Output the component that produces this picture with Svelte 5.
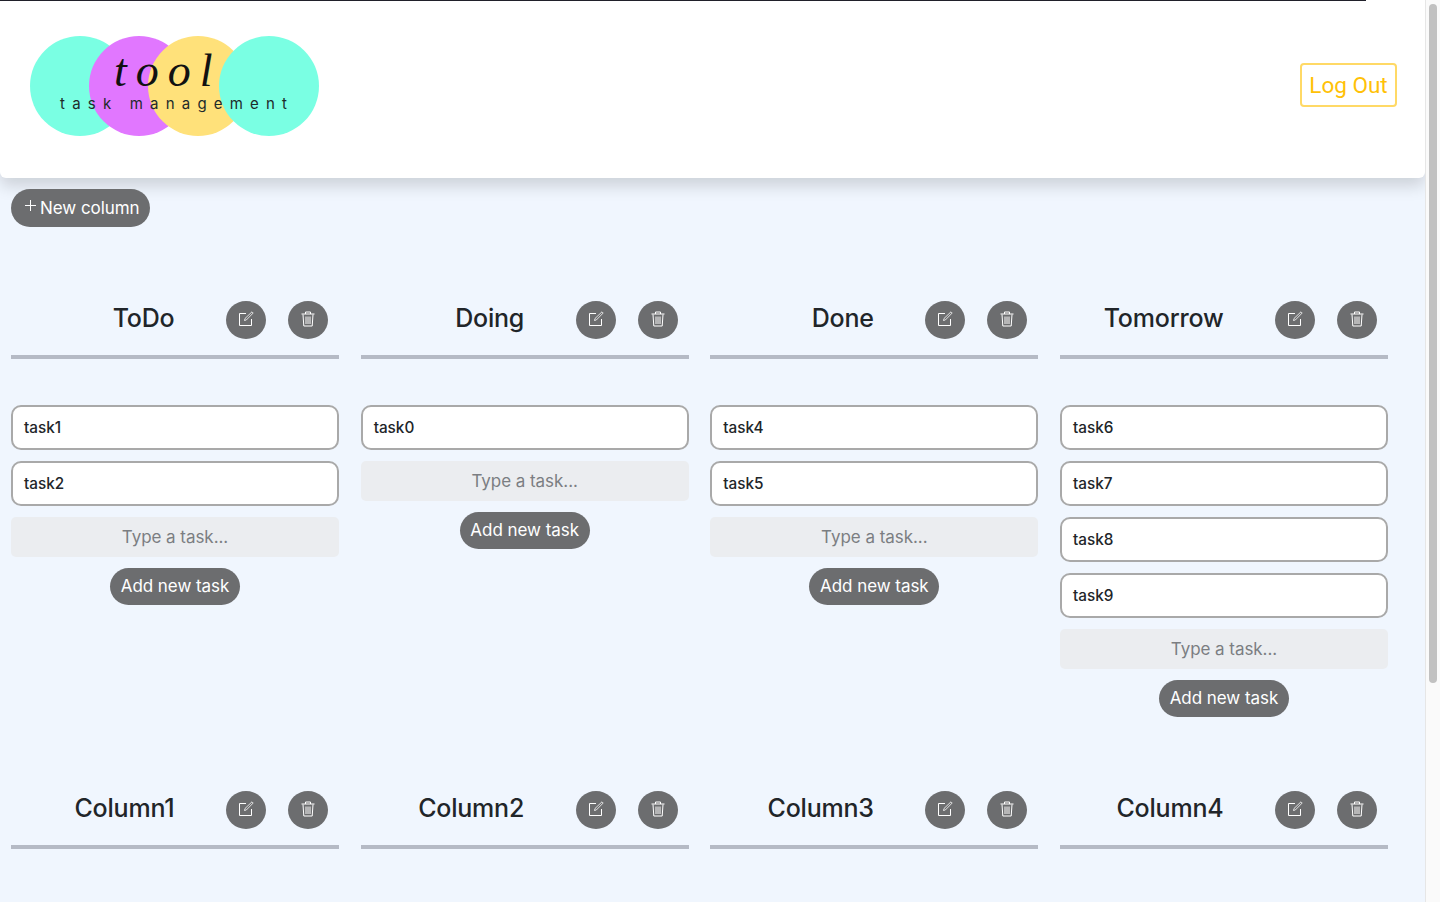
<script>
	const rows = [
		[
			{ title: 'ToDo', tasks: ['task1', 'task2'] },
			{ title: 'Doing', tasks: ['task0'] },
			{ title: 'Done', tasks: ['task4', 'task5'] },
			{ title: 'Tomorrow', tasks: ['task6', 'task7', 'task8', 'task9'] }
		],
		[
			{ title: 'Column1', tasks: [] },
			{ title: 'Column2', tasks: [] },
			{ title: 'Column3', tasks: [] },
			{ title: 'Column4', tasks: [] }
		]
	];
</script>

<div class="page">
	<div class="topline"></div>
	<header class="navbar">
		<div class="logo">
			<span class="circle c1"></span>
			<span class="circle c2"></span>
			<span class="circle c3"></span>
			<span class="circle c4"></span>
			<span class="tool">tool</span>
			<span class="sub">task management</span>
		</div>
		<button class="logout">Log Out</button>
	</header>

	<main class="board">
		<button class="pill new-col">
			<svg class="plus" width="11" height="11" viewBox="0 0 11 11" stroke="#fff" stroke-width="1">
				<path d="M5.5 0v11M0 5.5h11" />
			</svg>
			<span>New column</span>
		</button>

		{#each rows as row, r}
			<div class="row" class:last={r === rows.length - 1}>
				{#each row as col}
					<section class="column">
						<div class="col-head">
							<h2>{col.title}</h2>
							<button class="round" aria-label="Edit column">
								<svg width="16" height="16" viewBox="0 0 16 16" fill="none" stroke="#fff" stroke-width="1">
									<path d="M13.5 8v6.5h-12v-12H8" />
									<path d="M6.5 9.5l.5-2L14 .8l1.2 1.2L8.3 9z" stroke-width=".8" />
								</svg>
							</button>
							<button class="round" aria-label="Delete column">
								<svg width="16" height="16" viewBox="0 0 16 16" fill="none" stroke="#fff" stroke-width="1">
									<path d="M1.5 3h13M5.5 3V1h5v2" />
									<path d="M3 3.5l.8 11.5h8.4l.8-11.5" />
									<path d="M6 5.5v7.5M8 5.5v7.5M10 5.5v7.5" />
								</svg>
							</button>
						</div>
						<div class="rule"></div>
						{#if r === 0}
							<div class="tasks">
								{#each col.tasks as task}
									<div class="task">{task}</div>
								{/each}
								<input class="type-task" placeholder="Type a task..." />
								<button class="pill add">Add new task</button>
							</div>
						{/if}
					</section>
				{/each}
			</div>
		{/each}
	</main>

	<div class="scrollbar"><div class="thumb"></div></div>
</div>

<style>
	:global(html), :global(body) {
		margin: 0;
		height: 902px;
		overflow: hidden;
	}
	.page {
		height: 902px;
		width: 1440px;
		background: #f0f6fe;
		font-family: Inter, "Liberation Sans", sans-serif;
		color: #212529;
		position: relative;
		overflow: hidden;
	}
	.topline {
		position: absolute;
		left: 0;
		top: 0;
		width: 1366px;
		height: 1px;
		background: #20202a;
		z-index: 2;
	}
	.navbar {
		width: 1425px;
		height: 178px;
		box-sizing: border-box;
		background: #fff;
		border-radius: 0 0 6px 6px;
		box-shadow: 0 8px 16px rgba(0, 0, 0, 0.15);
		display: flex;
		align-items: center;
		justify-content: space-between;
		padding: 0 28px 0 30px;
		position: relative;
	}
	.logo {
		position: relative;
		width: 289px;
		height: 100px;
		margin-top: -6px;
	}
	.circle {
		position: absolute;
		top: 0;
		width: 100px;
		height: 100px;
		border-radius: 50%;
	}
	.c1 { left: 0; background: #7affe3; }
	.c2 { left: 59px; background: #e177ff; }
	.c3 { left: 118px; background: #ffe17a; }
	.c4 { left: 189px; background: #7affe3; }
	.tool {
		position: absolute;
		left: 84px;
		top: 5px;
		font-family: "Liberation Serif", serif;
		font-style: italic;
		font-size: 46px;
		line-height: 60px;
		letter-spacing: 9px;
		color: #111;
	}
	.sub {
		position: absolute;
		left: 30px;
		top: 58px;
		font-size: 15px;
		line-height: 20px;
		letter-spacing: 7.2px;
		white-space: nowrap;
		color: #1d2a2a;
	}
	.logout {
		width: 97px;
		height: 44px;
		margin-top: -8px;
		box-sizing: border-box;
		background: #fff;
		border: 2px solid #ffd966;
		border-radius: 4px;
		color: #ffc107;
		font-family: Roboto, sans-serif;
		font-size: 22.5px;
		padding: 0;
	}
	.board {
		padding: 11px 0 0 11px;
	}
	.pill {
		background: #6c6d6f;
		color: #fff;
		border: none;
		border-radius: 19px;
		font-family: inherit;
		font-size: 17px;
		height: 38px;
		padding: 0 0 1px;
		letter-spacing: -0.05px;
	}
	.new-col {
		width: 139px;
		display: flex;
		align-items: center;
		padding: 0 0 1px 14px;
		gap: 4px;
		position: relative;
		z-index: 1;
	}
	.plus {
		position: relative;
		top: -2px;
	}
	.row {
		display: grid;
		grid-template-columns: repeat(4, 328px);
		column-gap: 21.67px;
		padding-top: 73px;
		height: 417px;
	}
	.row.last {
		height: auto;
	}
	.col-head {
		display: flex;
		align-items: center;
		height: 40px;
	}
	h2 {
		width: 163.5px;
		flex: none;
		margin: 0 51.5px 0 0;
		text-align: right;
		font-size: 25px;
		font-weight: 500;
		line-height: 36px;
		position: relative;
		top: -2px;
		letter-spacing: -0.2px;
		white-space: nowrap;
	}
	.round {
		width: 40px;
		height: 38px;
		flex: none;
		border: none;
		border-radius: 50%;
		background: #6c6d6f;
		padding: 0 0 2px;
		display: flex;
		align-items: center;
		justify-content: center;
	}
	.round + .round {
		margin-left: 22px;
	}
	.rule {
		height: 4px;
		background: #b5bac5;
		margin-top: 15px;
	}
	.tasks {
		display: flex;
		flex-direction: column;
		align-items: center;
		gap: 11px;
		margin-top: 46px;
	}
	.task {
		width: 100%;
		height: 45px;
		box-sizing: border-box;
		background: #fff;
		border: 2px solid #a9a9a9;
		border-radius: 10px;
		padding: 0 11px;
		font-size: 15.3px;
		font-weight: 500;
		line-height: 41px;
	}
	.type-task {
		width: 100%;
		height: 40px;
		box-sizing: border-box;
		background: #ebedf0;
		border: none;
		border-radius: 5px;
		text-align: center;
		font-family: inherit;
		font-size: 17px;
		letter-spacing: -0.05px;
	}
	.type-task::placeholder {
		color: #7b7e82;
		opacity: 1;
	}
	.add {
		width: 130px;
		height: 37px;
	}
	.scrollbar {
		position: absolute;
		right: 0;
		top: 0;
		width: 15px;
		height: 902px;
		box-sizing: border-box;
		background: #fafafa;
		border-left: 1px solid #e6e6e6;
		padding: 4px 3px 0 3px;
	}
	.thumb {
		width: 8px;
		height: 679px;
		border-radius: 4px;
		background: #c1c1c1;
	}
</style>
